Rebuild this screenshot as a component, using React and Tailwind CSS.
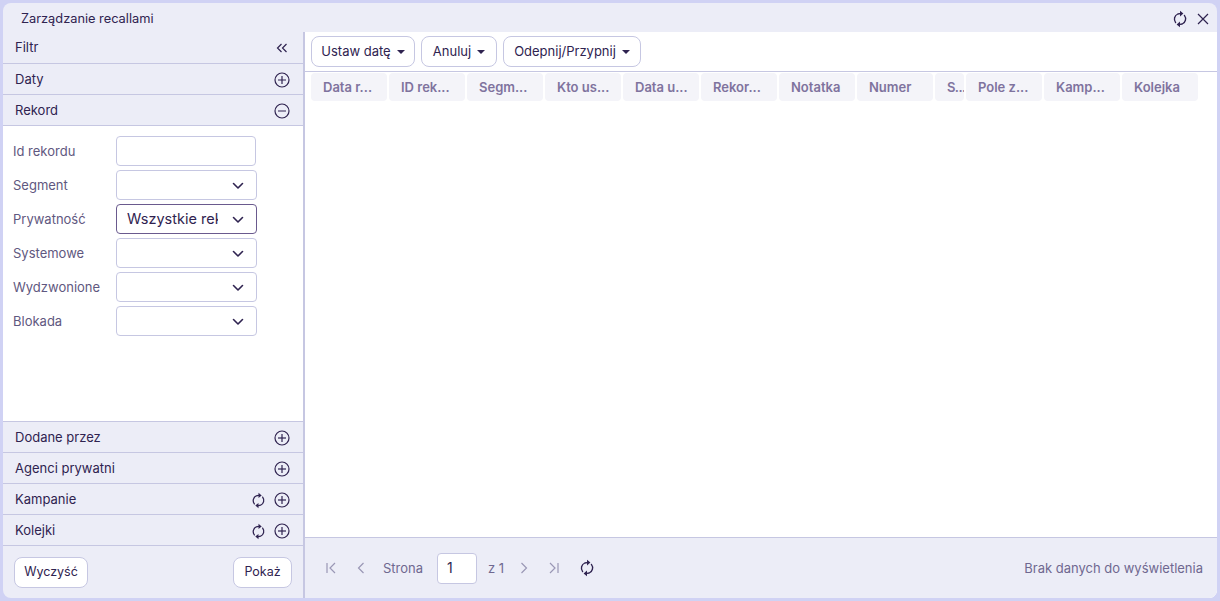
const FONT = "font-['Inter','Liberation_Sans',sans-serif]";

function Reload({ size = 18 }) {
  return (
    <svg width={size} height={size} viewBox="0 0 18 18" fill="none">
      <path d="M4.6 12.6A5.6 5.6 0 0 1 6.8 4L9 3.6" stroke="#2f2350" strokeWidth="1.35" strokeLinecap="round" />
      <path d="M9 0.8 12.4 3.6 9 6.4Z" fill="#2f2350" />
      <path d="M13.4 5.4A5.6 5.6 0 0 1 11.2 14L9 14.4" stroke="#2f2350" strokeWidth="1.35" strokeLinecap="round" />
      <path d="M9 17.2 5.6 14.4 9 11.6Z" fill="#2f2350" />
    </svg>
  );
}

function CircleIcon({ minus = false }) {
  return (
    <svg width="16" height="16" viewBox="0 0 16 16" fill="none" stroke="#2f2350" strokeWidth="1.2">
      <circle cx="8" cy="8" r="7" />
      <path d="M4 8H12" />
      {!minus && <path d="M8 4V12" />}
    </svg>
  );
}

function Chevron() {
  return (
    <svg width="12" height="8" viewBox="0 0 12 8" fill="none" stroke="#2f2350" strokeWidth="1.6" strokeLinecap="round" strokeLinejoin="round" className="mt-[2px]">
      <path d="M1.5 1.5 6 6l4.5-4.5" />
    </svg>
  );
}

function Caret() {
  return <span className="ml-[6px] inline-block h-0 w-0 border-x-[4px] border-t-[4px] border-x-transparent border-t-[#2f2350]" />;
}

function Section({ title, minus, reload }) {
  return (
    <div className="flex h-[31px] items-center justify-between border-b border-[#c6c7e2] pl-3 pr-[13px] pt-[2px] text-[13px] text-[#2f2350]">
      <span>{title}</span>
      <span className="flex items-center gap-[7px]">
        {reload && <Reload size={17} />}
        <CircleIcon minus={minus} />
      </span>
    </div>
  );
}

function Field({ label, select, value, active }) {
  return (
    <div className="flex h-[30px] items-center">
      <span className="w-[103px] pt-[2px] text-[13px] text-[#5f5880]">{label}</span>
      <div className={`flex h-[30px] items-center justify-between rounded-[4px] border bg-white pl-[10px] pr-3 ${select ? "w-[141px]" : "w-[140px]"} ${active ? "border-[#6a5a8e]" : "border-[#c6c7e2]"}`}>
        <span className="w-[91px] overflow-hidden whitespace-nowrap text-[14.5px] text-[#2f2350]">{value}</span>
        {select && <Chevron />}
      </div>
    </div>
  );
}

function Btn({ children, className = "" }) {
  return (
    <div className={`flex h-[31px] items-center justify-center rounded-[8px] border border-[#c6c7e2] bg-white text-[#2f2350] ${className}`}>
      {children}
    </div>
  );
}

const COLS = [
  ["Data r...", "w-[76px]"], ["ID rek...", "w-[76px]"], ["Segm...", "w-[76px]"], ["Kto us...", "w-[76px]"],
  ["Data u...", "w-[76px]"], ["Rekor...", "w-[76px]"], ["Notatka", "w-[76px]"], ["Numer", "w-[76px]"],
  ["S...", "w-[29px] tracking-[-0.6px]"], ["Pole z...", "w-[76px]"], ["Kamp...", "w-[76px]"], ["Kolejka", "w-[76px]"],
];

function Pager({ d }) {
  return (
    <svg width="16" height="16" viewBox="0 0 16 16" fill="none" stroke="#9a97b5" strokeWidth="1.2">
      <path d={d} />
    </svg>
  );
}

export default function App() {
  return (
    <div className={`h-[601px] w-[1220px] bg-[#d0d2f4] p-[3px] ${FONT}`}>
      <div className="flex h-[595px] w-[1214px] flex-col overflow-hidden rounded-[8px] bg-[#ecedf7]">
        <div className="flex h-[29px] shrink-0 items-center justify-between pl-[18px] pr-[7px] pt-[3px] text-[12.8px] text-[#2f2350]">
          <span>Zarządzanie recallami</span>
          <span className="flex items-center gap-[7px]">
            <Reload size={18} />
            <svg width="14" height="14" viewBox="0 0 14 14" fill="none" stroke="#2f2350" strokeWidth="1.2"><path d="M2 2 12 12M12 2 2 12" /></svg>
          </span>
        </div>
        <div className="flex min-h-0 flex-1">
          <div className="flex w-[302px] shrink-0 flex-col border-r-2 border-[#c6c7e2]">
            <div className="flex h-[32px] items-center justify-between border-b border-[#c6c7e2] pl-3 pr-[15px] pt-[1px] text-[13px] text-[#2f2350]">
              <span>Filtr</span>
              <svg width="12" height="12" viewBox="0 0 12 12" fill="none" stroke="#2f2350" strokeWidth="1.2"><path d="M5.5 2 1.5 6l4 4M10.5 2l-4 4 4 4" /></svg>
            </div>
            <Section title="Daty" />
            <Section title="Rekord" minus />
            <div className="flex flex-1 flex-col gap-[4px] border-b border-[#c6c7e2] bg-white pl-[10px] pt-[10px]">
              <Field label="Id rekordu" />
              <Field label="Segment" select />
              <Field label="Prywatność" select value="Wszystkie rekordy" active />
              <Field label="Systemowe" select />
              <Field label="Wydzwonione" select />
              <Field label="Blokada" select />
            </div>
            <Section title="Dodane przez" />
            <Section title="Agenci prywatni" />
            <Section title="Kampanie" reload />
            <Section title="Kolejki" reload />
            <div className="flex h-[52px] shrink-0 items-center justify-between pl-[11px] pr-[11px]">
              <Btn className="w-[74px] text-[12.5px]">Wyczyść</Btn>
              <Btn className="w-[59px] text-[12.5px]">Pokaż</Btn>
            </div>
          </div>
          <div className="flex min-w-0 flex-1 flex-col bg-white">
            <div className="flex h-[40px] shrink-0 items-center gap-[6px] border-b border-[#c6c7e2] pl-[6px]">
              <Btn className="w-[104px] text-[13px]">Ustaw datę<Caret /></Btn>
              <Btn className="w-[76px] text-[13px]">Anuluj<Caret /></Btn>
              <Btn className="w-[138px] text-[13px]">Odepnij/Przypnij<Caret /></Btn>
            </div>
            <div className="flex flex-1 items-start gap-[2px] pl-[6px] pt-[1px]">
              {COLS.map(([t, w]) => (
                <div key={t} className={`flex h-[28px] shrink-0 items-center overflow-hidden whitespace-nowrap rounded-[4px] bg-[#f4f4f9] pl-[12px] pt-[1px] text-[13px] font-semibold text-[#7f739e] ${w}`}>
                  {t}
                </div>
              ))}
            </div>
            <div className="flex h-[61px] shrink-0 items-center justify-between border-t border-[#c6c7e2] bg-[#ecedf7] pl-[19px] pr-[14px] text-[13px] text-[#6f6890]">
              <div className="flex items-center">
                <Pager d="M3 3V13M11 3 6 8l5 5" />
                <span className="w-[13px]" />
                <Pager d="M10.5 3 5.5 8l5 5" />
                <span className="ml-[14px] w-[54px] pt-[2px]">Strona</span>
                <div className="flex h-[31px] w-[40px] items-center rounded-[4px] border border-[#c6c7e2] bg-white pb-[2px] pl-[9px] text-[14px] text-[#2f2350]">1</div>
                <span className="ml-[11px] w-[21px] pt-[2px]">z 1</span>
                <span className="w-[7px]" />
                <Pager d="M5.5 3l5 5-5 5" />
                <span className="w-[13px]" />
                <Pager d="M5 3l5 5-5 5M13 3V13" />
                <span className="w-[17px]" />
                <Reload size={18} />
              </div>
              <span className="pt-[2px]">Brak danych do wyświetlenia</span>
            </div>
          </div>
        </div>
      </div>
    </div>
  );
}
